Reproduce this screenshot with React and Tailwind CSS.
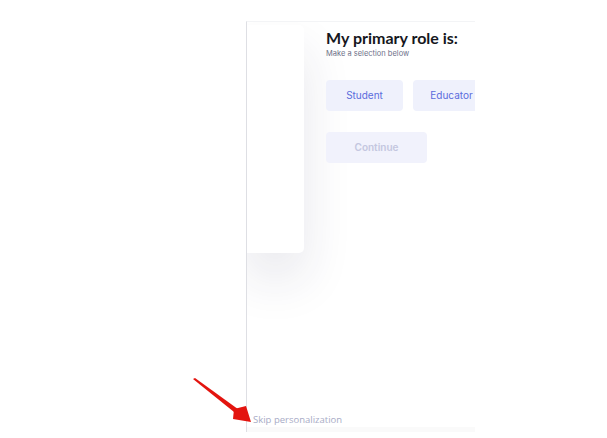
import React from 'react';

// Red annotation arrow pointing at the skip link
const Arrow = () => (
  <svg className="absolute left-[190px] top-[375px]" width="66" height="52" viewBox="0 0 66 52">
    <polygon points="3,4 5,3 52,37 49,41" fill="#e3140f" />
    <polygon points="44,34 56,31 61,47 43,44" fill="#e3140f" />
  </svg>
);

const RoleButton = ({ children }) => (
  <button className="w-[77px] h-[31px] shrink-0 rounded-[4px] bg-[#eff1fc] text-[10px] text-[#5b6cdc]">
    {children}
  </button>
);

export default function App() {
  return (
    <div className="relative w-[607px] h-[438px] bg-white overflow-hidden" style={{ fontFamily: 'Inter, "Liberation Sans", sans-serif' }}>
      <div className="ml-[246px] mt-[21px] w-[229px] h-[411px] flex flex-col border-l border-[#dedfe4] border-t border-t-[#f3f4f6] overflow-hidden">
        <div className="flex flex-1">
          {/* side card */}
          <div className="mt-[3px] w-[57px] h-[228px] shrink-0 rounded-r-[5px] bg-white shadow-[0_26px_50px_rgba(40,40,80,0.11)]" />

          <div className="ml-[22px] pt-[7px] flex flex-col">
            <h1 className="text-[16px] font-bold leading-[18px] text-[#16171d] whitespace-nowrap" style={{ fontFamily: 'Lato, sans-serif' }}>
              My primary role is:
            </h1>
            <p className="mt-[2px] text-[7.5px] leading-[10px] text-[#6d7088] whitespace-nowrap">Make a selection below</p>

            <div className="mt-[21px] flex gap-[10px]">
              <RoleButton>Student</RoleButton>
              <RoleButton>Educator</RoleButton>
            </div>

            <button className="mt-[21px] w-[101px] h-[31px] rounded-[4px] bg-[#f1f2fc] text-[10px] font-semibold text-[#c4c7e0]">
              Continue
            </button>
          </div>
        </div>

        <div className="pl-[6px] pb-[1px] text-[9.5px] leading-[12px] text-[#a8abc6]" style={{ fontFamily: '"Open Sans", sans-serif' }}>
          Skip personalization
        </div>
        <div className="h-[5px] bg-[#fafafa]" />
      </div>
      <Arrow />
    </div>
  );
}
